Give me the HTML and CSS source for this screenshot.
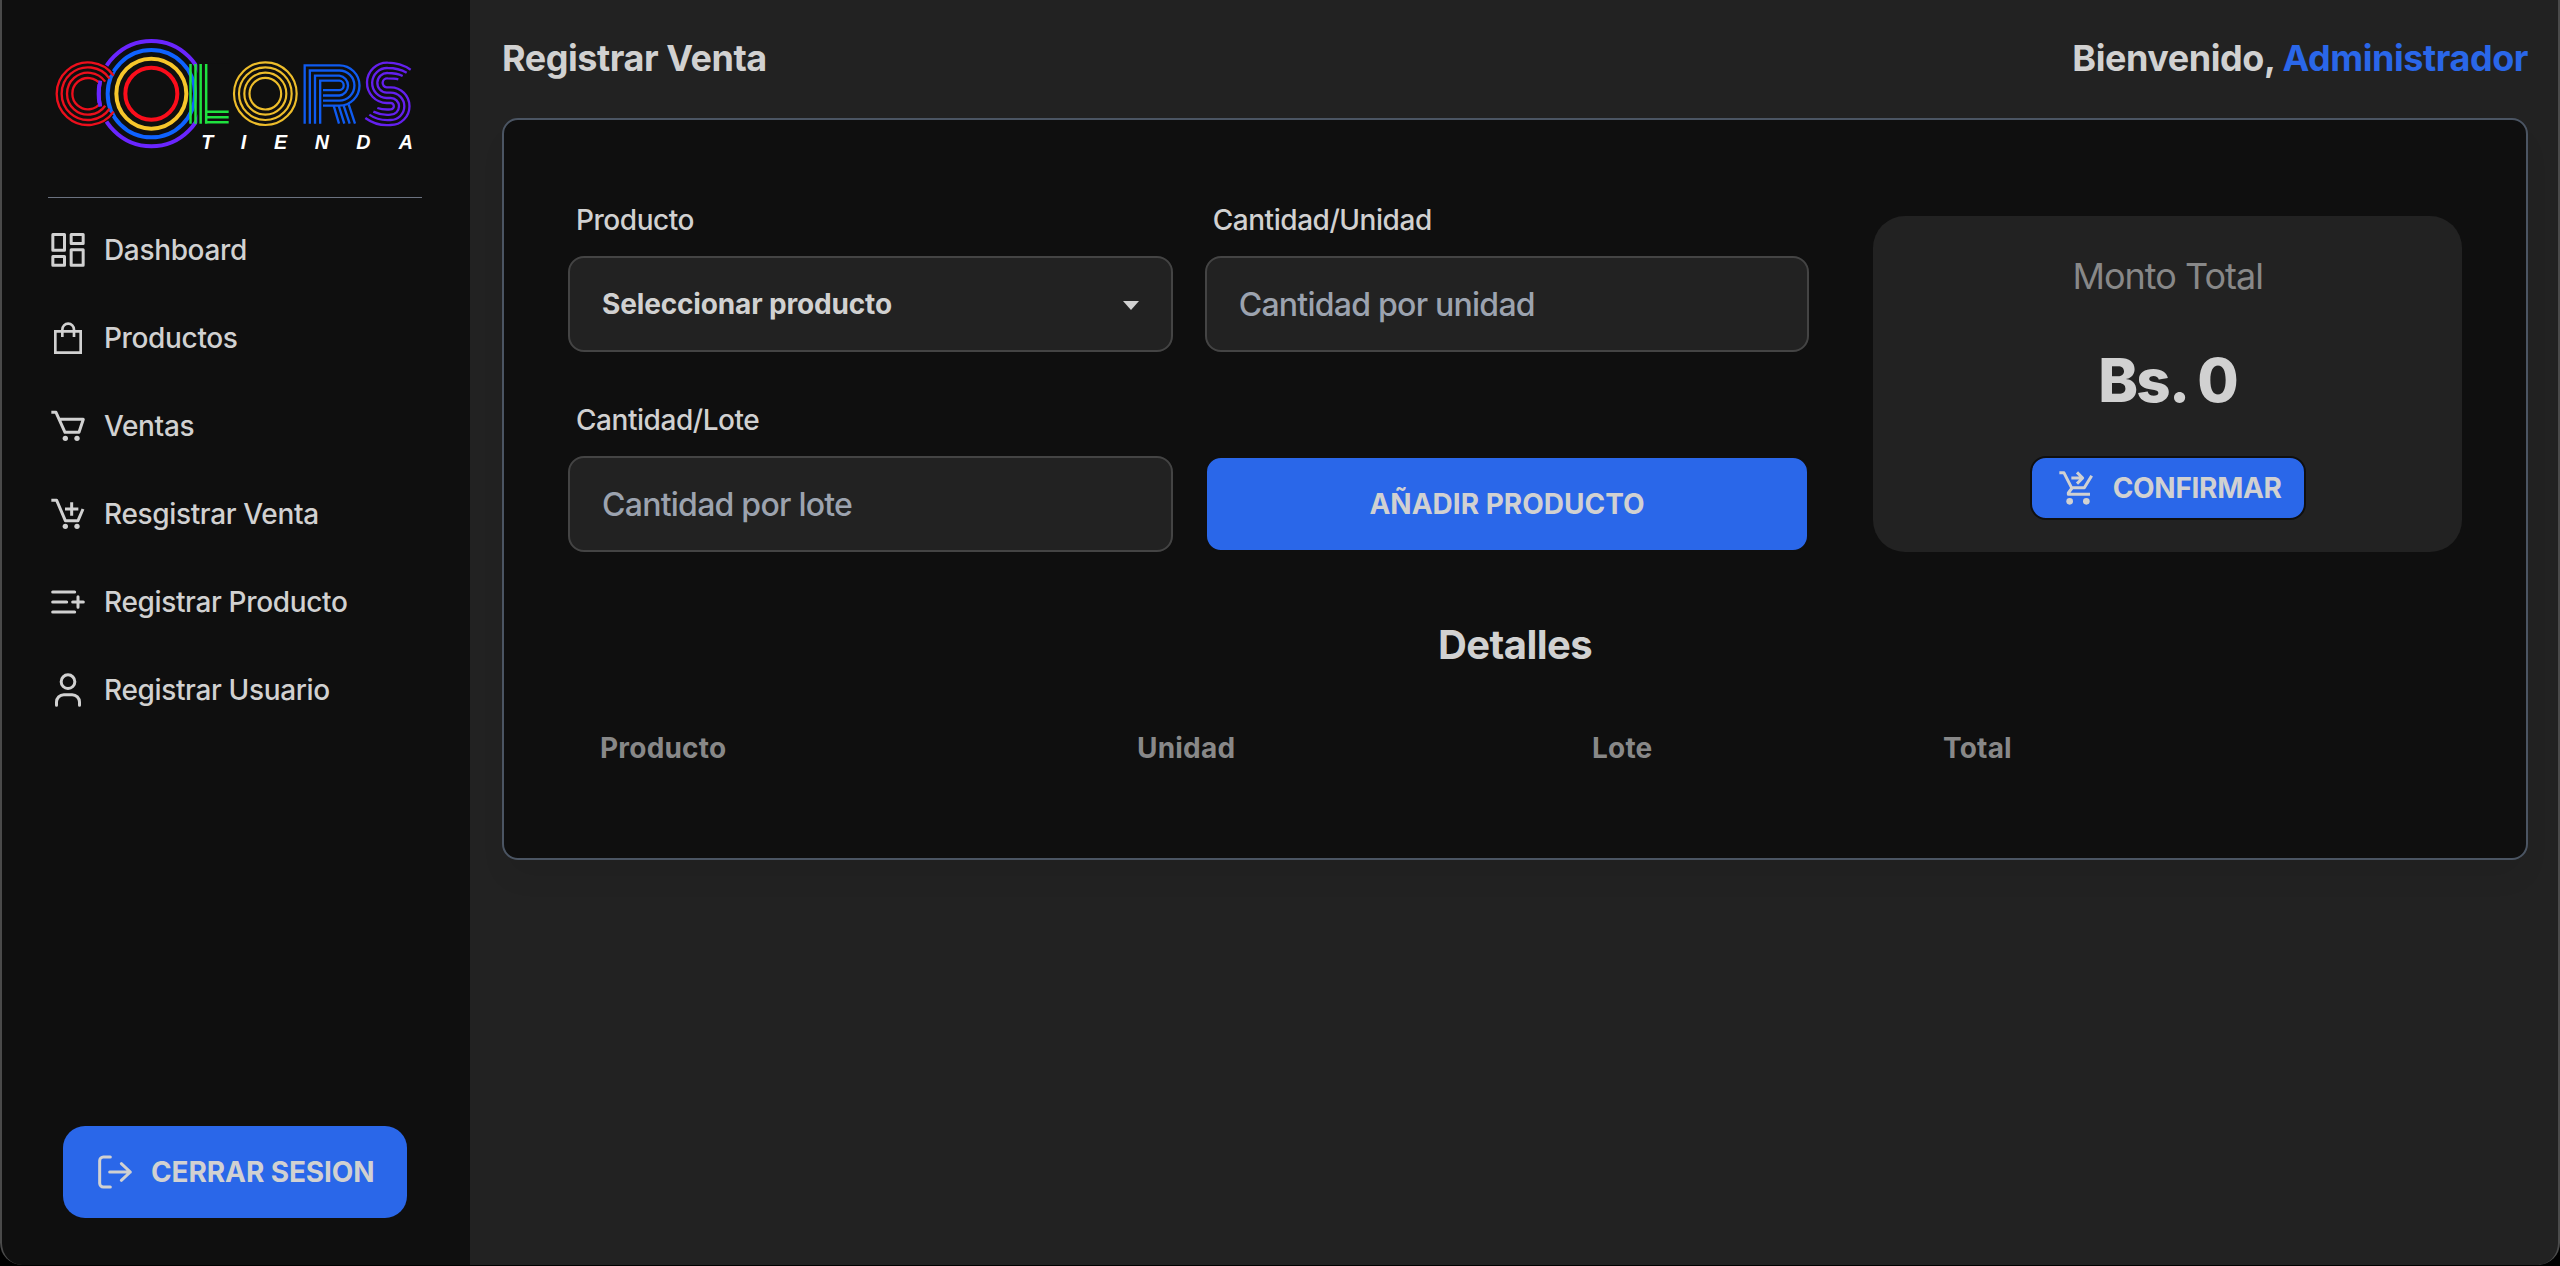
FILE: index.html
```
<!DOCTYPE html>
<html lang="es">
<head>
<meta charset="utf-8">
<title>Registrar Venta - Colors Tienda</title>
<link rel="stylesheet" href="styles.css">
</head>
<body>
<div class="app">
  <aside class="sidebar">
    <svg class="logo" viewBox="144 108 1122 375" fill="none">
      <g stroke-width="12">
        <circle cx="454" cy="281" r="158" stroke="#6a25ff"/>
        <circle cx="454" cy="281" r="131" stroke="#0f62ff"/>
        <circle cx="454" cy="281" r="105" stroke="#f7c62b"/>
        <circle cx="454" cy="281" r="78" stroke="#fb0d1b"/>
      </g>
      <path stroke="#0f0f0f" stroke-width="60" d="M318 235A70.500 70.500 0 1 0 318 327"/>
      <g stroke="#ec0f1c" stroke-width="7">
        <path d="M341 227A94 94 0 1 0 341 335"/>
        <path d="M328.700 235.700A79 79 0 1 0 328.700 326.300"/>
        <path d="M315.600 244.800A63 63 0 1 0 315.600 317.200"/>
        <path d="M302.500 254A47 47 0 1 0 302.500 308"/>
      </g>
      <path stroke="#6a25ff" stroke-width="11" d="M301 242Q292 281 301 320"/>
      <path fill="#0f0f0f" d="M592 190H690V372H592z"/>
      <path stroke="#1fe23f" stroke-width="7.500" d="M571.500 192V371M586.500 192V371M602 192V371M618.500 192V371M618 335.500H686M618 351.500H686M618 367H686"/>
      <g stroke="#edbd2b" stroke-width="6.500">
        <circle cx="796" cy="281" r="94"/>
        <circle cx="796" cy="281" r="79"/>
        <circle cx="796" cy="281" r="63"/>
        <circle cx="796" cy="281" r="47.500"/>
      </g>
      <g stroke="#0f5bf0" stroke-width="7">
        <path d="M914 371V196H1018A60.500 60.500 0 0 1 1018 317H969"/>
        <path d="M929.500 371V211.500H1018A45.200 45.200 0 0 1 1018 302H969"/>
        <path d="M945 371V227H1018A30 30 0 0 1 1018 286.500H969"/>
        <path d="M960.500 371V242H1018A14.300 14.300 0 0 1 1018 270.500H969"/>
        <path d="M1001 317L1017 371M1016 317L1033 371M1031 317L1049 371M1046 313L1065 371"/>
      </g>
      <g stroke="#6420ee" stroke-width="7">
        <path d="M1232 209Q1200 188 1163 188A60.500 60.500 0 0 0 1160 309H1172A9.500 9.500 0 0 1 1172 328Q1150 330 1132 324"/>
        <path d="M1220 218Q1196 204 1163 204A45 45 0 0 0 1160 294H1172A25 25 0 0 1 1172 344Q1145 347 1120 335"/>
        <path d="M1208 228Q1190 219 1163 219A29.500 29.500 0 0 0 1160 278H1172A41 41 0 0 1 1172 360Q1135 363 1108 344"/>
        <path d="M1195 238Q1184 235 1163 235A13.500 13.500 0 0 0 1160 262H1172A56.500 56.500 0 0 1 1172 375Q1130 379 1096 354"/>
      </g>
      <text class="logo-text" x="604 722 822 944 1069 1196" y="447">TIENDA</text>
    </svg>
    <hr class="divider">
    <nav class="menu">
      <a class="item"><svg class="icon" viewBox="0 0 120 120"><rect x="14.500" y="13.500" width="35" height="47"/><rect x="69.500" y="13.500" width="36" height="27"/><rect x="14.500" y="79.500" width="35" height="26"/><rect x="69.500" y="59.500" width="36" height="46"/></svg><span>Dashboard</span></a>
      <a class="item"><svg class="icon sharp" viewBox="0 0 120 120"><path d="M22 40H98V104H22z"/><path d="M43 57V35a17.500 18 0 0 1 35 0V57"/></svg><span>Productos</span></a>
      <a class="item"><svg class="icon butt" viewBox="0 0 120 120"><path d="M10 19H24L51 79H93L106 40H34"/><circle class="dot" cx="52" cy="97" r="8"/><circle class="dot" cx="87" cy="97" r="8"/></svg><span>Ventas</span></a>
      <a class="item"><svg class="icon butt" viewBox="0 0 120 120"><path d="M10 19H26L52 80H90L105 45M51 45H91M71 25V65"/><circle class="dot" cx="52" cy="97" r="8"/><circle class="dot" cx="87" cy="97" r="8"/></svg><span>Resgistrar Venta</span></a>
      <a class="item"><svg class="icon" viewBox="0 0 120 120"><path d="M14 30H80M14 60H56M14 90H80M74 60H106M90 44V76"/></svg><span>Registrar Producto</span></a>
      <a class="item"><svg class="icon" viewBox="0 0 120 120"><circle cx="60" cy="35" r="20.500"/><path d="M25.500 106V96a22 22 0 0 1 22-22h25a22 22 0 0 1 22 22v10"/></svg><span>Registrar Usuario</span></a>
    </nav>
    <button class="logout"><svg class="icon" viewBox="285 216 120 120"><path d="M331 231H310a11 11 0 0 0-11 11V310a11 11 0 0 0 11 11H331M329 276H391M364 251L391 276L364 301"/></svg><span>CERRAR SESION</span></button>
  </aside>

  <main class="main">
    <header class="header">
      <h1 class="title">Registrar Venta</h1>
      <p class="title">Bienvenido, <span class="user">Administrador</span></p>
    </header>

    <section class="card">
      <div class="top">
        <form class="fields">
          <div class="field">
            <label class="label">Producto</label>
            <div class="control select"><span>Seleccionar producto</span><i class="caret"></i></div>
          </div>
          <div class="field">
            <label class="label">Cantidad/Unidad</label>
            <input class="control" type="text" placeholder="Cantidad por unidad">
          </div>
          <div class="field">
            <label class="label">Cantidad/Lote</label>
            <input class="control" type="text" placeholder="Cantidad por lote">
          </div>
          <button class="add" type="button">AÑADIR PRODUCTO</button>
        </form>
        <div class="total">
          <p class="total-label">Monto Total</p>
          <p class="amount">Bs. 0</p>
          <button class="confirm"><svg class="icon butt" viewBox="99 84 120 120"><path d="M109 98.500H123L146 143.500H184L206 107"/><path d="M147 144L136 159V162.500H201M145 114H179M162 97L179 114L162 131"/><circle class="dot" cx="140" cy="184" r="10"/><circle class="dot" cx="190" cy="184" r="10"/></svg><span>CONFIRMAR</span></button>
        </div>
      </div>
      <h2 class="subtitle">Detalles</h2>
      <table class="details">
        <thead><tr><th class="c-product">Producto</th><th class="c-unit">Unidad</th><th class="c-lot">Lote</th><th>Total</th></tr></thead>
      </table>
    </section>
  </main>
</div>
</body>
</html>
```
FILE: styles.css
```
* { box-sizing: border-box; margin: 0; padding: 0; }

body {
  background: #000;
  color: #d1d1d1;
  font-family: Inter, "Liberation Sans", sans-serif;
  font-size: 28px;
  font-weight: 450;
  line-height: 40px;
  overflow: hidden;
}

.app {
  position: relative;
  display: flex;
  width: 2560px;
  height: 1265px;
  background: #222;
  border-radius: 0 0 22px 22px;
  overflow: hidden;
}

/* window frame drawn over both columns */
.app::after {
  content: "";
  position: absolute;
  inset: 0;
  border: solid #4a4a4a;
  border-width: 0 2px;
  border-radius: 0 0 22px 22px;
  pointer-events: none;
}

button { border: 0; font: inherit; font-weight: 650; color: inherit; background: #2a67e9; }

.icon {
  width: 40px;
  height: 40px;
  flex: none;
  fill: none;
  stroke: currentColor;
  stroke-width: 9;
  stroke-linecap: round;
  stroke-linejoin: round;
}
.butt { stroke-linecap: butt; }
.sharp { stroke-width: 8; stroke-linecap: butt; stroke-linejoin: miter; }
.dot { fill: currentColor; stroke: none; }

/* sidebar */
.sidebar {
  display: flex;
  flex-direction: column;
  width: 470px;
  flex: none;
  padding: 36px 48px 47px;
  background: #0f0f0f;
}
.logo { width: 374px; height: 125px; flex: none; }
.logo-text { fill: #fff; font: italic bold 59px "Liberation Sans", sans-serif; }
.divider { height: 1px; flex: none; margin: 36px 0 8px; border: 0; background: #6b7280; }
.menu { display: flex; flex-direction: column; flex: 1; }
.item { display: flex; align-items: center; gap: 16px; height: 88px; letter-spacing: -0.35px; }
.logout {
  display: flex;
  align-items: center;
  align-self: center;
  gap: 16px;
  width: 344px;
  height: 92px;
  padding: 0 32px;
  border-radius: 22px;
  letter-spacing: -0.1px;
  white-space: nowrap;
}

/* main column */
.main { flex: 1; padding: 30px 32px 0; }
.header { display: flex; justify-content: space-between; height: 88px; line-height: 56px; }
.title { font-size: 36px; font-weight: 700; letter-spacing: -0.45px; }
.user { color: #2a67e9; }

.card {
  height: 742px;
  padding: 80px 64px 0;
  background: #0f0f0f;
  border: 2px solid #4b5563;
  border-radius: 16px;
  box-shadow: 0 20px 30px -6px rgba(0, 0, 0, 0.07);
}
.top { display: grid; grid-template-columns: repeat(3, 1fr); gap: 64px; }
.fields { grid-column: span 2; display: grid; grid-template-columns: 1fr 1fr; gap: 48px 32px; }
.field { display: flex; flex-direction: column; gap: 16px; }
.label { padding-left: 8px; letter-spacing: -0.45px; }
.control {
  width: 100%;
  height: 96px;
  padding: 0 32px;
  background: #222;
  border: 2px solid #444;
  border-radius: 16px;
  color: inherit;
  font: 450 32px Inter, "Liberation Sans", sans-serif;
  letter-spacing: -0.75px;
}
.control::placeholder { color: #9ca3af; opacity: 1; }
.select {
  display: flex;
  align-items: center;
  justify-content: space-between;
  font-size: 28px;
  font-weight: 650;
  letter-spacing: -0.15px;
}
.caret { border: solid transparent; border-width: 9px 8px 0; border-top-color: #d1d1d1; margin-top: 2px; }
.add {
  align-self: end;
  height: 96px;
  border: 2px solid #0f0f0f;
  border-radius: 16px;
  font-weight: 700;
}

.total {
  display: flex;
  flex-direction: column;
  align-items: center;
  margin-top: 16px;
  padding-top: 32px;
  background: #222;
  border-radius: 32px;
}
.total-label { color: #888; font-size: 36px; font-weight: 400; line-height: 56px; letter-spacing: -1px; }
.amount { margin-top: 38px; font-size: 60px; font-weight: 800; line-height: 76px; letter-spacing: -1.7px; }
.confirm {
  display: flex;
  align-items: center;
  gap: 17px;
  width: 276px;
  height: 64px;
  margin-top: 38px;
  padding: 0 24px;
  border: 2px solid #0f0f0f;
  border-radius: 16px;
  letter-spacing: -0.3px;
}

.subtitle { margin-top: 65px; font-size: 40px; font-weight: 700; line-height: 56px; text-align: center; letter-spacing: -0.6px; }
.details { width: 100%; margin-top: 51px; border-spacing: 0; table-layout: fixed; }
.details th { padding: 4px 32px; color: #888; font-weight: 700; text-align: left; letter-spacing: 0.2px; }
.details th + th { padding-left: 33px; }
.c-product { width: 536px; }
.c-unit { width: 455px; }
.c-lot { width: 351px; }
```
